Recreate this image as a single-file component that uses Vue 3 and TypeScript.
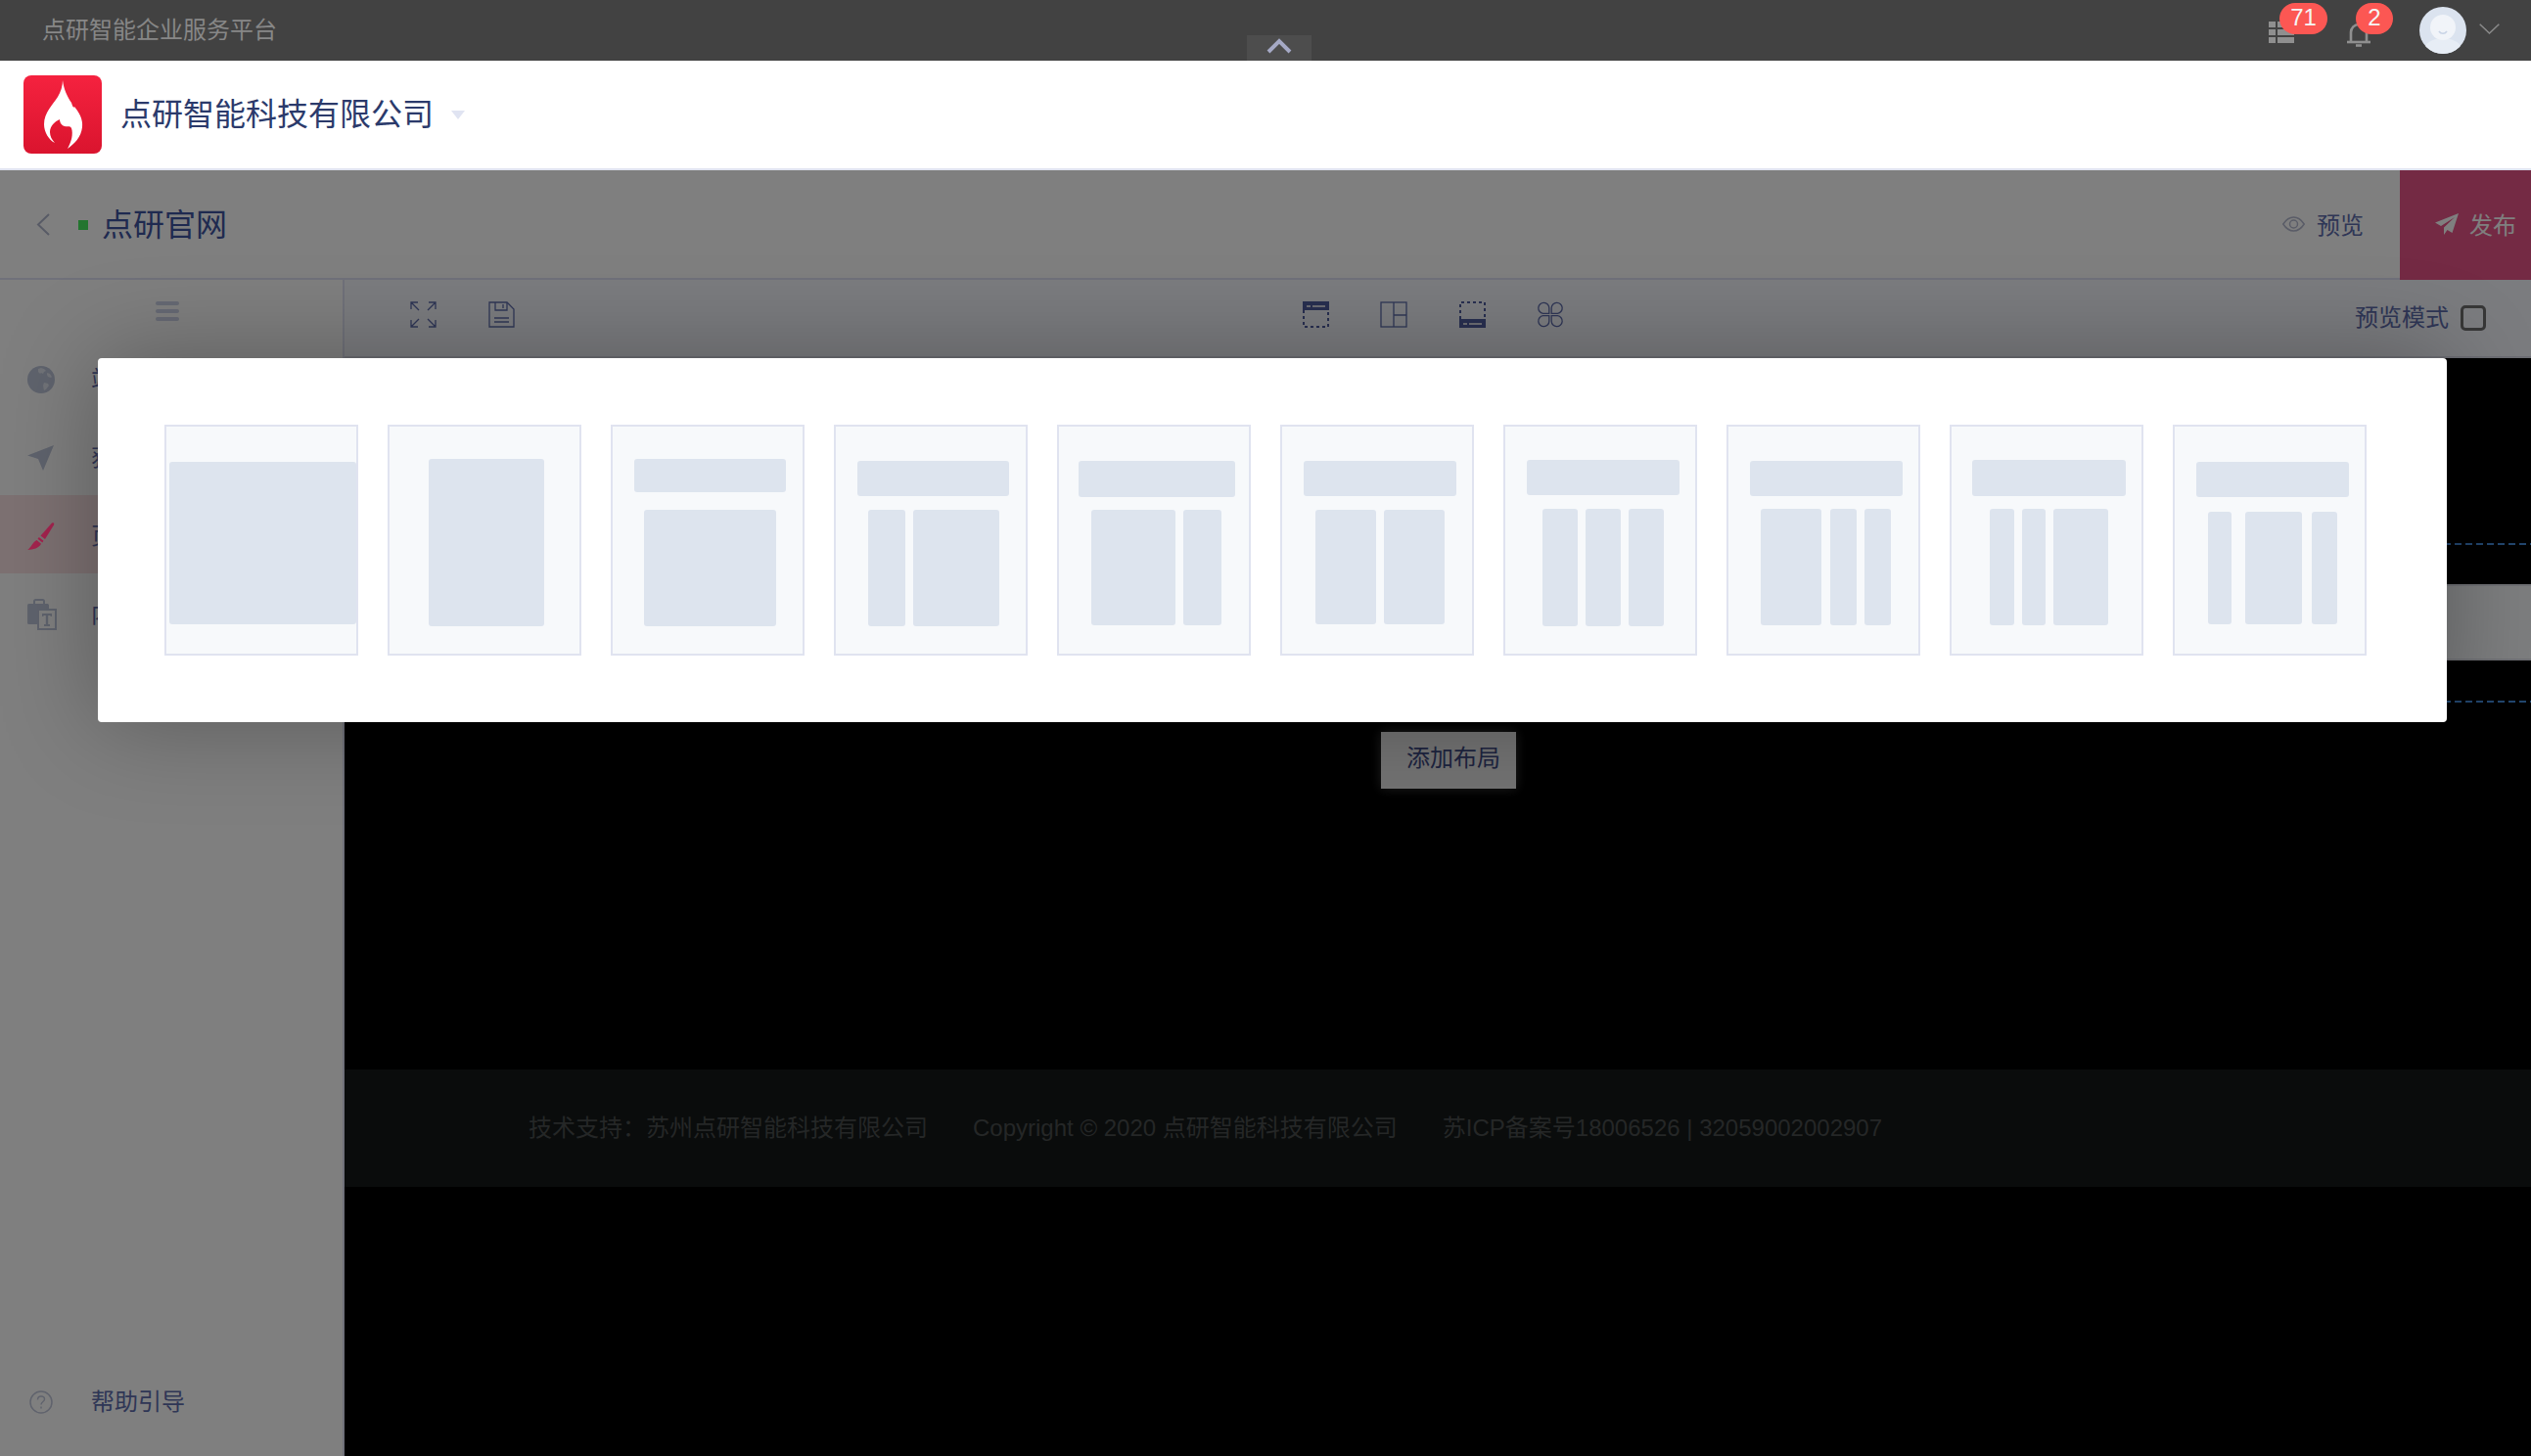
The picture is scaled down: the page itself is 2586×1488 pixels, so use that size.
<script setup lang="ts">
interface Block { x: number; y: number; w: number; h: number }

const b = (x: number, y: number, w: number, h: number): Block => ({ x, y, w, h })

const layouts: Block[][] = [
  [b(5, 38, 191, 166)],
  [b(42, 35, 118, 171)],
  [b(24, 35, 155, 34), b(34, 87, 135, 119)],
  [b(24, 37, 155, 36), b(35, 87, 38, 119), b(81, 87, 88, 119)],
  [b(22, 37, 160, 37), b(35, 87, 86, 118), b(129, 87, 39, 118)],
  [b(24, 37, 156, 36), b(36, 87, 62, 117), b(106, 87, 62, 117)],
  [b(24, 36, 156, 36), b(40, 86, 36, 120), b(84, 86, 36, 120), b(128, 86, 36, 120)],
  [b(24, 37, 156, 36), b(35, 86, 62, 119), b(106, 86, 27, 119), b(141, 86, 27, 119)],
  [b(23, 36, 157, 37), b(41, 86, 25, 119), b(74, 86, 24, 119), b(106, 86, 56, 119)],
  [b(24, 38, 156, 36), b(36, 89, 24, 115), b(74, 89, 58, 115), b(142, 89, 26, 115)],
]

const menu = [
  { key: 'globe', label: '站点管理', active: false },
  { key: 'plane', label: '获客推广', active: false },
  { key: 'brush', label: '页面设计', active: true },
  { key: 'clip', label: '内容素材', active: false },
]
</script>

<template>
  <div class="page">
    <div class="topbar">
      <span class="platform">点研智能企业服务平台</span>
      <div class="collapse-tab">
        <svg width="26" height="16" viewBox="0 0 26 16"><path d="M2 14 13 3l11 11" fill="none" stroke="#a5a9c5" stroke-width="4" /></svg>
      </div>
      <div class="top-right">
        <div class="notice grid-notice">
          <svg class="grid-icon" width="26" height="22" viewBox="0 0 26 22" fill="#8f8f8f">
            <rect x="0" y="0" width="7" height="6" /><rect x="9" y="0" width="17" height="6" />
            <rect x="0" y="8" width="7" height="6" /><rect x="9" y="8" width="17" height="6" />
            <rect x="0" y="16" width="7" height="6" /><rect x="9" y="16" width="17" height="6" />
          </svg>
          <span class="badge badge-wide">71</span>
        </div>
        <div class="notice bell-notice">
          <svg class="bell-icon" width="24" height="26" viewBox="0 0 24 26" fill="none" stroke="#8f8f8f" stroke-width="2.6">
            <path d="M4 20V11a8 8 0 0 1 16 0v9" />
            <path d="M0 21h24" />
            <path d="M9 24.5h6" />
          </svg>
          <span class="badge badge-narrow">2</span>
        </div>
        <svg class="avatar" width="48" height="48" viewBox="0 0 48 48">
          <defs>
            <clipPath id="avatar-clip"><circle cx="24" cy="24" r="24" /></clipPath>
          </defs>
          <g clip-path="url(#avatar-clip)">
            <rect width="48" height="48" fill="#dbe3ef" />
            <ellipse cx="24" cy="44" rx="19" ry="12" fill="#e7edf5" />
            <circle cx="24" cy="21" r="13" fill="#f1f4f9" />
            <path d="M20 25c2 3 6 3 8 0" fill="none" stroke="#c9d4e6" stroke-width="1.6" />
          </g>
        </svg>
        <svg class="user-caret" width="21" height="11" viewBox="0 0 21 11"><path d="M.7.7 10.500 10 20.300.7" fill="none" stroke="#8a8a8a" stroke-width="1.5" /></svg>
      </div>
    </div>

    <header class="brandbar">
      <svg class="logo" width="80" height="80" viewBox="0 0 80 80">
        <defs>
          <linearGradient id="logo-fill" x1="0" y1="0" x2="0" y2="1">
            <stop offset="0" stop-color="#f5223f" />
            <stop offset="1" stop-color="#da142e" />
          </linearGradient>
        </defs>
        <rect width="80" height="80" rx="8" fill="url(#logo-fill)" />
        <path d="M40 5C41 14 45 22 49 28C50 31 51 34 52 32C57 38 61 45 60 53C59 63 52 70 45 75C49 68 51 60 49 54C47 51 45 53 42 52C38 51 37 47 37 45C32 47 27 52 27 58C27 62 29 66 32 69C26 66 21 58 21 50C21 38 30 30 35 22C38 17 40 11 40 5Z" fill="#fff" />
      </svg>
      <span class="company">点研智能科技有限公司</span>
      <i class="company-caret"></i>
    </header>

    <div class="stage">
      <div class="titlebar">
        <svg class="back" width="14" height="23" viewBox="0 0 14 23"><path d="M13 1 2 11.500 13 22" fill="none" stroke="#b0b6cc" stroke-width="2" /></svg>
        <i class="status-dot"></i>
        <span class="site-name">点研官网</span>
        <div class="title-actions">
          <div class="preview-btn">
            <svg width="23" height="16" viewBox="0 0 23 16" fill="none" stroke="#b4b9cf" stroke-width="1.5">
              <path d="M.8 8C4 3 7.500 1 11.500 1S19 3 22.200 8C19 13 15.500 15 11.500 15S4 13 .8 8Z" />
              <circle cx="11.500" cy="8" r="4" />
            </svg>
            <span class="action-text">预览</span>
          </div>
          <div class="publish-btn">
            <svg width="24" height="22" viewBox="0 0 24 22">
              <path d="M24 0 0 9.500l6 3.500L20 4 9 14.500V22l3.500-5 5 3Z" fill="#fff" />
            </svg>
            <span class="action-text">发布</span>
          </div>
        </div>
      </div>

      <div class="workspace">
        <aside class="sidebar">
          <div class="hamburger"><i></i><i></i><i></i></div>
          <nav class="menu">
            <div v-for="item in menu" :key="item.key" class="menu-row" :class="{ active: item.active }">
              <svg v-if="item.key === 'globe'" class="menu-icon" width="28" height="28" viewBox="0 0 28 28">
                <circle cx="14" cy="14" r="14" fill="#bec6da" />
                <path d="M11 3l3-1 3 1 2 2-2 1-1 2-2-1-1 1-2-2ZM20 7l3 1 2 3-1 1-3-1-1-2ZM17 17l4 1 1 2-3 4-2 1-1-5Z" fill="#e2e6f1" />
              </svg>
              <svg v-else-if="item.key === 'plane'" class="menu-icon" width="28" height="28" viewBox="0 0 28 28">
                <path d="M27 1 0 11.500 11 15l5 12Z" fill="#bec6da" />
              </svg>
              <svg v-else-if="item.key === 'brush'" class="menu-icon brush-icon" width="28" height="28" viewBox="0 0 28 28" fill="#a3234e">
                <path d="M25 .5c1.500-.8 2.800.4 2 2L18 17l-4.500-3.500Z" />
                <path d="M11.800 15 16.500 18.800 15.300 20.500 10.500 16.800Z" />
                <path d="M9.500 18 14 21.800C12 26 6 28 0 28 3.500 26.500 5 20 9.500 18Z" />
              </svg>
              <svg v-else class="menu-icon clip-icon" width="30" height="32" viewBox="0 0 30 32">
                <path d="M7 5V2.500A1.500 1.500 0 0 1 8.500 1h7A1.500 1.500 0 0 1 17 2.500V5" fill="none" stroke="#bec6da" stroke-width="2" />
                <rect x="0" y="5" width="22" height="21" rx="1.500" fill="#bec6da" />
                <rect x="11" y="11" width="18" height="20" fill="#fff" stroke="#bec6da" stroke-width="2" />
                <path d="M15 15h10v3h-1.500v-1h-2.300v9h1.800v2h-6v-2h1.800v-9h-2.300v1H15Z" fill="#bec6da" />
              </svg>
              <span class="menu-label">{{ item.label }}</span>
            </div>
          </nav>
          <div class="help">
            <svg width="24" height="24" viewBox="0 0 24 24" fill="none" stroke="#c0c6da" stroke-width="1.500">
              <circle cx="12" cy="12" r="11" />
              <path d="M8.500 9.500C8.500 7 10 6 12 6s3.500 1.300 3.500 3c0 2.500-3.500 2.500-3.500 5.500" />
              <path d="M12 16.500v2" />
            </svg>
            <span>帮助引导</span>
          </div>
        </aside>

        <main class="main">
          <div class="toolbar">
            <div class="tool-group">
              <svg width="27" height="27" viewBox="0 0 27 27" fill="none" stroke="#5f6dac" stroke-width="1.300">
                <path d="M1 8V1h7M1 1l8 8M19 1h7v7M26 1l-8 8M1 19v7h7M1 26l8-8M26 19v7h-7M26 26l-8-8" />
              </svg>
              <svg width="27" height="27" viewBox="0 0 27 27" fill="none" stroke="#5f6dac" stroke-width="1.300">
                <path d="M1 1h18l7 7v18H1Z" />
                <path d="M7 1v8h12V1M15 3v4M6 17h15M6 21h15" />
              </svg>
            </div>
            <div class="tool-group center-tools">
              <svg width="28" height="27" viewBox="0 0 28 27">
                <rect x="1" y="0" width="27" height="9" fill="#515fa0" />
                <path d="M5 5h4M11 5h13" stroke="#d8dbe8" stroke-width="1.800" />
                <path d="M2 9v17h25V9" fill="none" stroke="#515fa0" stroke-width="2" stroke-dasharray="3 3" />
              </svg>
              <svg width="28" height="27" viewBox="0 0 28 27" fill="none" stroke="#5f6dac" stroke-width="1.300">
                <rect x="1" y="1" width="26" height="25" />
                <path d="M14 1v25M14 14h13" />
              </svg>
              <svg width="28" height="27" viewBox="0 0 28 27">
                <rect x="1" y="18" width="27" height="9" fill="#515fa0" />
                <path d="M5 23h4M11 23h13" stroke="#d8dbe8" stroke-width="1.800" />
                <path d="M2 18V1h25v17" fill="none" stroke="#515fa0" stroke-width="2" stroke-dasharray="3 3" />
              </svg>
              <svg width="28" height="27" viewBox="0 0 28 27" fill="none" stroke="#5f6dac" stroke-width="1.300">
                <path d="M12.800 12.300H6.500a5.500 5.500 0 1 1 6.300-5.500ZM15.200 12.300h6.300a5.500 5.500 0 1 0-6.300-5.500ZM12.800 14.700H6.500a5.500 5.500 0 1 0 6.300 5.500ZM15.200 14.700h6.300a5.500 5.500 0 1 1-6.300 5.500Z" />
              </svg>
            </div>
            <label class="preview-mode">
              <span>预览模式</span>
              <i class="checkbox"></i>
            </label>
          </div>

          <div class="canvas">
            <div class="dash-box">
              <div class="row-bar"></div>
            </div>
            <div class="add-layout">添加布局</div>
            <footer class="site-footer">
              <span>技术支持：苏州点研智能科技有限公司</span>
              <span>Copyright © 2020 点研智能科技有限公司</span>
              <span>苏ICP备案号18006526 | 32059002002907</span>
            </footer>
          </div>
        </main>
      </div>

      <div class="overlay"></div>
      <div class="modal">
        <div v-for="(blocks, i) in layouts" :key="i" class="layout-card">
          <svg width="194" height="232" viewBox="2 2 194 232">
            <g class="thumb">
              <rect v-for="(r, j) in blocks" :key="j" :x="r.x" :y="r.y" :width="r.w" :height="r.h" rx="3" />
            </g>
          </svg>
        </div>
      </div>
    </div>
  </div>
</template>

<style>
html,
body {
  margin: 0;
  background: #000;
}
</style>

<style scoped>
.page {
  width: 2586px;
  height: 1488px;
  overflow: hidden;
  display: flex;
  flex-direction: column;
  font-family: "Liberation Sans", "Noto Sans CJK SC", sans-serif;
  font-size: 24px;
  line-height: 32px;
}
svg {
  display: block;
  flex: none;
}
i {
  display: block;
}

/* top strip */
.topbar {
  position: relative;
  flex: none;
  height: 62px;
  background: #424242;
  display: flex;
  align-items: center;
  padding: 0 32px 4px 43px;
  box-sizing: border-box;
}
.platform {
  color: #878787;
  margin-top: 3px;
}
.collapse-tab {
  position: absolute;
  left: 1274px;
  bottom: 0;
  width: 66px;
  height: 26px;
  background: #4d4d4d;
  display: flex;
  justify-content: center;
  padding-top: 3px;
  box-sizing: border-box;
}
.top-right {
  margin-left: auto;
  display: flex;
  align-items: center;
}
.notice {
  position: relative;
}
.grid-notice {
  width: 26px;
  height: 22px;
  margin-top: 8px;
}
.bell-notice {
  width: 24px;
  height: 26px;
  margin: 12px 50px 0 54px;
}
.badge {
  position: absolute;
  top: -19px;
  height: 32px;
  border-radius: 16px;
  background: #fc5753;
  color: #f5f5f5;
  text-align: center;
  line-height: 30px;
}
.bell-notice .badge {
  top: -19px;
  left: 9px;
}
.badge-wide {
  left: 11px;
  width: 49px;
}
.badge-narrow {
  width: 38px;
}
.avatar {
  margin-top: 4px;
}
.user-caret {
  margin: 0 0 0 13px;
}

/* brand strip */
.brandbar {
  flex: none;
  height: 112px;
  background: #fff;
  border-bottom: 2px solid #e0e3f0;
  box-sizing: border-box;
  display: flex;
  align-items: center;
  padding: 0 0 4px 24px;
}
.logo {
  margin-top: 4px;
}
.company {
  margin: 4px 0 0 19px;
  font-size: 32px;
  line-height: 44px;
  color: #2b3a6b;
}
.company-caret {
  margin: 4px 0 0 18px;
  border-left: 7px solid transparent;
  border-right: 7px solid transparent;
  border-top: 9px solid #e0e4f2;
}

/* overlaid stage */
.stage {
  position: relative;
  flex: 1;
  min-height: 0;
  display: flex;
  flex-direction: column;
}
.titlebar {
  flex: none;
  height: 112px;
  box-sizing: border-box;
  background: #fff;
  border-bottom: 2px solid #e0e3f4;
  display: flex;
  align-items: center;
  padding-left: 37px;
}
.back {
  margin-top: 1px;
}
.status-dot {
  width: 10px;
  height: 10px;
  margin: 2px 0 0 29px;
  background: #46ea5e;
}
.site-name {
  margin: 1px 0 0 14px;
  font-size: 32px;
  line-height: 44px;
  color: #3e54a0;
}
.title-actions {
  margin-left: auto;
  align-self: stretch;
  display: flex;
  align-items: stretch;
  margin-bottom: -2px;
}
.action-text {
  margin-top: 3px;
}
.preview-btn {
  display: flex;
  align-items: center;
  gap: 12px;
  margin-right: 37px;
  color: #5e6cac;
  padding-bottom: 2px;
}
.publish-btn {
  width: 134px;
  background: #e85488;
  color: #fff;
  display: flex;
  align-items: center;
  gap: 11px;
  padding: 0 0 2px 36px;
  box-sizing: border-box;
}

.workspace {
  flex: 1;
  min-height: 0;
  display: flex;
}

/* sidebar */
.sidebar {
  flex: none;
  width: 352px;
  box-sizing: border-box;
  background: #fff;
  border-right: 2px solid #e0e3f4;
  display: flex;
  flex-direction: column;
}
.hamburger {
  height: 60px;
  padding: 22px 0 0 159px;
  box-sizing: border-box;
}
.hamburger i {
  width: 24px;
  height: 4px;
  margin-bottom: 4px;
  border-radius: 2px;
  background: #ccd2e8;
}
.menu-row {
  height: 80px;
  box-sizing: border-box;
  display: flex;
  align-items: center;
  padding: 3px 0 0 28px;
  color: #5e6cac;
}
.menu-row.active {
  background: #fae2e4;
}
.menu-icon {
  width: 28px;
}
.brush-icon {
  position: relative;
  z-index: 1;
}
.clip-icon {
  width: 30px;
  margin-right: -2px;
}
.menu-label {
  margin-left: 37px;
  white-space: nowrap;
}
.help {
  margin-top: auto;
  height: 80px;
  margin-bottom: 15px;
  display: flex;
  align-items: center;
  padding-left: 30px;
  gap: 39px;
  color: #5e6cac;
}

/* main */
.main {
  flex: 1;
  min-width: 0;
  display: flex;
  flex-direction: column;
}
.toolbar {
  flex: none;
  height: 80px;
  box-sizing: border-box;
  background: #f6f8ff;
  border-bottom: 2px solid #d8dae6;
  display: flex;
  align-items: center;
  padding: 0 46px 8px 67px;
}
.tool-group {
  display: flex;
  align-items: center;
  gap: 53px;
}
.center-tools {
  margin-left: 804px;
  gap: 52px;
}
.preview-mode {
  margin-left: auto;
  display: flex;
  align-items: center;
  gap: 12px;
  color: #5e6cac;
  padding-top: 8px;
}
.checkbox {
  width: 26px;
  height: 26px;
  box-sizing: border-box;
  border: 3px solid #6e6e6e;
  border-radius: 5px;
}

/* canvas */
.canvas {
  flex: 1;
  background: #000;
  display: flex;
  flex-direction: column;
}
.dash-box {
  margin-top: 189px;
  height: 163px;
  box-sizing: border-box;
  padding: 42px 0 41px;
  background-image:
    repeating-linear-gradient(90deg, #458cdc 0 7px, transparent 7px 11px),
    repeating-linear-gradient(90deg, #458cdc 0 7px, transparent 7px 11px);
  background-size: 100% 2px;
  background-position: 0 0, 0 100%;
  background-repeat: no-repeat;
}
.row-bar {
  height: 78px;
  box-sizing: border-box;
  background: #fbfcff;
  border-top: 2px solid #e0e2ea;
  border-bottom: 2px solid #e0e2ea;
}
.add-layout {
  align-self: flex-start;
  margin: 30px 0 0 1059px;
  width: 138px;
  height: 58px;
  box-sizing: border-box;
  padding: 11px 0 0 26px;
  background: #e6e6e6;
  color: #3c4880;
  box-shadow: 0 0 12px rgba(255, 255, 255, 0.25);
}
.site-footer {
  margin-top: 287px;
  height: 120px;
  background: #141818;
  color: #4a4e4e;
  display: flex;
  align-items: center;
  gap: 46px;
  padding-left: 188px;
}

/* dialog */
.overlay {
  position: absolute;
  inset: 0;
  background: rgba(0, 0, 0, 0.5);
}
.modal {
  position: absolute;
  z-index: 2;
  left: 100px;
  top: 192px;
  width: 2400px;
  height: 372px;
  box-sizing: border-box;
  padding: 68px;
  background: #fff;
  border-radius: 4px;
  box-shadow: 0 0 100px rgba(0, 0, 0, 0.3);
  display: flex;
  gap: 30px;
}
.layout-card {
  flex: none;
  width: 198px;
  height: 236px;
  box-sizing: border-box;
  border: 2px solid #e0e3f0;
  background: #f7f9fb;
  overflow: hidden;
}
.thumb {
  fill: #dde4ee;
  filter: blur(0.5px);
}
</style>
